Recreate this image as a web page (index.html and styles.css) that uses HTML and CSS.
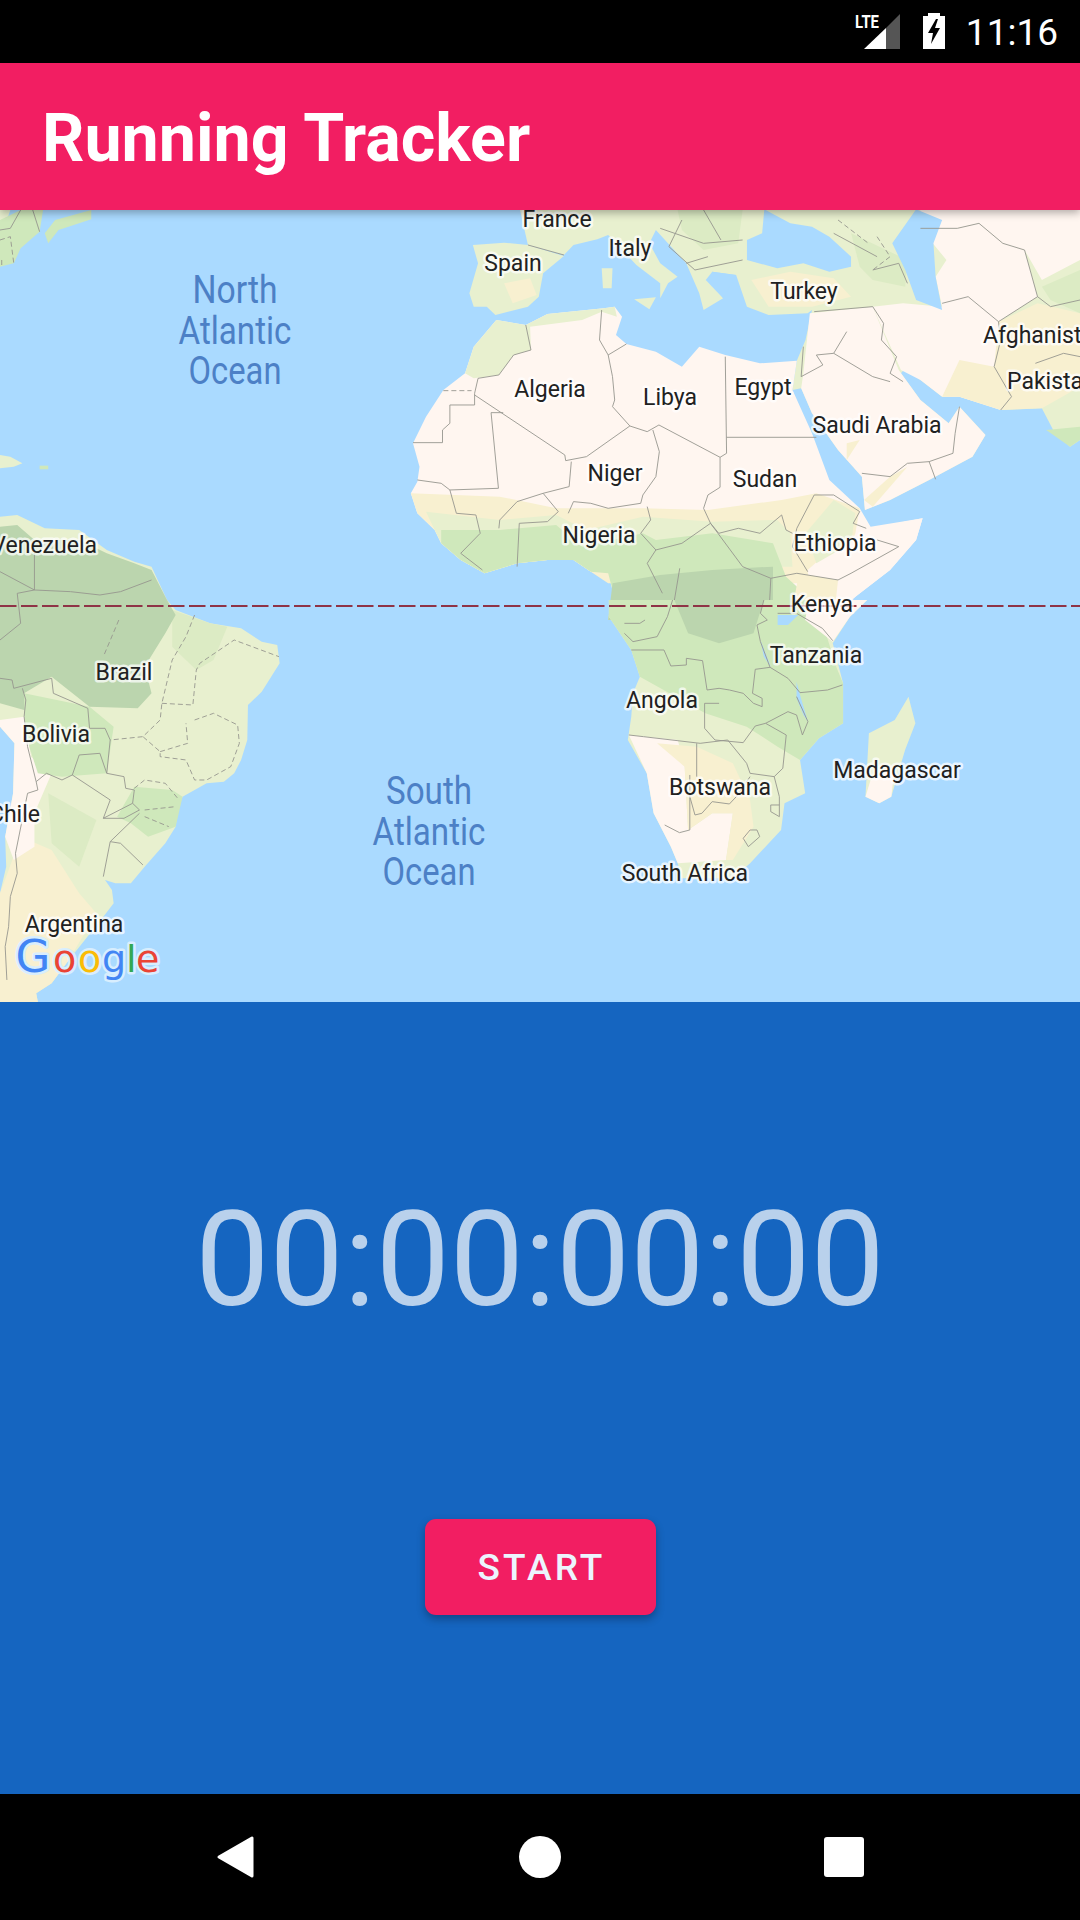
FILE: index.html
```html
<!DOCTYPE html>
<html lang="en">
<head>
<meta charset="utf-8">
<title>Running Tracker</title>
<link rel="stylesheet" href="styles.css">
</head>
<body>
<div class="screen">
  <header class="status-bar">
    <svg class="signal-icon" width="46" height="38" viewBox="0 0 46 38">
      <text class="lte" x="0" y="15" textLength="24" lengthAdjust="spacingAndGlyphs">LTE</text>
      <path class="signal-off" d="M31 36V15L45 1V36Z"/>
      <path class="signal-on" d="M9 36L31 15V36Z"/>
    </svg>
    <svg class="battery-icon" width="22" height="36" viewBox="0 0 22 36">
      <path class="battery" d="M5 0H17V3H22V36H0V3H5Z"/>
      <path class="bolt" d="M13 6L5 20H10L8 31L17 15H12L15 6Z"/>
    </svg>
    <span class="clock">11:16</span>
  </header>

  <div class="app-bar"><h1 class="app-title">Running Tracker</h1></div>

  <section class="map">
    <svg class="map-svg" width="1080" height="792" viewBox="0 0 1080 792">
      <rect class="ocean" width="1080" height="792"/>

      <!-- Europe, Africa north and Asia: authored at 0.4337 x 0.3333 -->
      <g transform="translate(400,-10) scale(0.4337,0.3333)">
        <path class="land" d="M275,20L295,135L378,165L400,135L455,118L480,105L545,195L600,250L600,295L618,250L640,230L600,190L575,130L590,90L660,190L690,280L700,330L745,295L715,235L720,215L775,225L800,320L850,345L940,340L950,330L935,420L915,482L905,570L925,565L950,640L1010,750L1065,830L1072,930L1130,900L1220,840L1320,770L1350,705L1290,620L1265,670L1200,600L1155,520L1165,505L1200,540L1250,590L1290,590L1390,630L1480,625L1510,700L1545,740L1568,720V20Z"/>
        <path class="land" d="M168,135L240,128L295,135L378,168L330,220L320,290L295,320L220,345L200,320L170,320L160,280L180,190Z"/>
        <path class="sand" d="M240,250L300,235L315,285L260,310Z"/>
        <path class="land" d="M465,205L490,205L488,265L468,265Z"/>
        <path class="land" d="M540,298L590,292L575,328Z"/>
        <path class="soft" d="M640,30L790,30L780,130L700,150L650,90Z"/>
        <path class="soft" d="M1040,100L1170,180L1165,260L1090,240L1060,200Z"/>
        <path class="sand" d="M810,240L900,215L1000,235L1040,290L950,320L850,320Z"/>
        <path class="desert" d="M945,340L1090,320L1150,510L1200,600L1265,670L1290,620L1350,705L1320,770L1220,840L1130,900L1072,930L1065,830L1010,750L950,640L925,565L930,520Z"/>
        <path class="sand" d="M1030,730L1060,720L1030,780Z"/>
        <path class="sand" d="M1070,900L1130,830L1170,800L1090,920Z"/>
        <path class="desert" d="M1090,320L1160,310L1250,320L1235,230L1260,180L1200,85L1285,85L1335,70L1390,130L1440,150L1470,290L1380,365L1385,430L1370,500L1410,590L1385,630L1290,590L1250,590L1200,540L1155,510Z"/>
        <path class="sand" d="M1290,480L1370,500L1410,590L1385,630L1290,590L1250,590Z"/>
        <path class="desert" d="M1200,30H1568V180L1480,240L1440,150L1390,130L1335,70L1285,85L1200,85Z"/>
        <path class="sand" d="M1380,365L1470,310L1568,340V560L1480,625L1385,630L1410,590L1370,500Z"/>
        <path class="soft" d="M1480,260L1568,210V340L1500,300Z"/>
        <path class="green" d="M1490,690L1568,680V720L1545,740Z"/>
        <path class="ocean" d="M840,28L900,70L950,80L990,110L1040,170L1040,200L990,215L930,190L870,205L800,180L800,120L835,100Z"/>
        <path class="ocean" d="M1190,28L1250,60L1230,130L1235,230L1250,330L1190,300L1165,210L1135,130Z"/>
        <path class="ocean" d="M720,215L775,225L745,295L705,240Z"/>

        <path class="desert" d="M222,360L290,375L340,342L470,325L495,320L512,350L498,405L522,432L590,455L650,500L690,440L750,465L830,490L915,482L905,570L950,700L990,840L1060,925L1085,980L1205,955L1190,1020L1130,1110L1050,1190L990,1260H480L490,1170L480,1120L440,1115L400,1080L340,1080L270,1090L195,1120L140,1080L95,1030L80,990L40,940L25,880L40,845L45,800L30,730L60,650L100,570L150,520L170,440Z"/>
        <path class="land" d="M222,360L290,375L340,342L470,325L495,320L500,350L465,335L420,360L300,380L302,450L262,465L228,525L170,535L150,520L170,440Z"/>
        <path class="sand" d="M25,880L230,890L360,925L560,925L710,930L880,900L960,880L1060,925L1050,1000L1000,1150H480L440,1115L400,1080L340,1080L270,1090L195,1120L140,1080L95,1030L80,990L40,940Z"/>
        <path class="land" d="M60,935L230,960L360,945L430,990L560,950L720,965L870,960L900,1000L905,1100H480L440,1115L400,1080L340,1080L270,1090L195,1120L140,1080L95,1030L80,990Z"/>
        <path class="green" d="M95,990L230,990L360,975L420,1040L560,1000L590,1020L720,1000L860,1030L890,1130L1000,1260H480L490,1170L480,1120L440,1115L400,1080L340,1080L270,1090L195,1120L140,1080L95,1030Z"/>
        <path class="dark" d="M490,1150L600,1125L720,1110L860,1100L860,1260H480Z"/>
        <path class="desert" d="M1085,985L1205,955L1190,1020L1130,1110L1050,1190L990,1260H950L940,1110L1000,1040Z"/>
        <path class="sand" d="M920,1120L1010,1140L1000,1260H900Z"/>
        <path class="land" d="M935,1000L1000,900L1050,940L1040,1030L960,1090Z"/>

        <g class="border">
          <path class="dash" d="M100,572H165"/>
          <path d="M290,375L302,450L262,465L228,525L180,535L172,580"/>
          <path d="M30,728H98V690L115,670V615H172V580"/>
          <path d="M172,585L380,765L382,782L430,770L530,678"/>
          <path d="M238,638H210L227,865L115,870L95,850L40,840"/>
          <path d="M530,678L570,695L597,675L738,772V862L710,885L700,925L716,970L735,1000L780,985L830,1000L880,945L890,990L905,1000"/>
          <path d="M750,470L753,760L738,772"/>
          <path d="M753,712H960"/>
          <path d="M465,330L460,420L480,465L490,530L495,600L490,620L530,678"/>
          <path d="M480,465L522,432"/>
          <path d="M583,690L598,755L590,830L560,885L555,910L480,925L440,910L400,905L388,940"/>
          <path d="M395,785L390,860L330,880L270,905L230,960L228,985"/>
          <path d="M330,880L365,935L340,965L275,970L270,1100"/>
          <path d="M115,870L130,940L175,945L185,1000L140,1060L190,1110"/>
          <path d="M955,885L915,985L905,1040L940,1115"/>
          <path d="M955,885L1000,885L1060,935L1045,970L1075,985"/>
          <path d="M716,970L790,1100L855,1135L915,1120L1010,1140L1040,1120L1150,1040L1100,1020"/>
          <path d="M570,920L578,960L555,1000L590,1050L650,1030L716,970"/>
          <path d="M590,1050L570,1090L605,1180"/>
          <path d="M645,1105L625,1260"/>
          <path d="M855,1135L850,1260"/>
          <path d="M955,335L1090,320L1115,370L1110,420L1145,470L1130,520L1160,545"/>
          <path d="M1030,395L1000,460L960,465L975,495L925,530L930,440"/>
          <path d="M1000,460L1090,530L1130,545"/>
          <path d="M1065,820L1130,830L1170,790L1220,785L1275,760L1280,700L1290,620"/>
          <path d="M1220,785L1235,838"/>
          <path d="M1250,310L1310,290L1380,365L1385,420L1370,500L1410,590L1385,630"/>
          <path d="M1200,85L1285,85L1335,70L1390,130L1440,150L1470,290L1380,365"/>
          <path d="M1470,290L1500,320L1568,300"/>
          <path d="M1465,490L1530,460L1568,470"/>
          <path d="M295,135L378,165M600,85L700,130L790,120M650,60L620,140L680,210L790,180M700,30L740,120M1090,210L1150,190L1170,250M1000,100L1100,170M660,190L710,170"/>
          <path class="dash" d="M1100,110L1130,170L1090,210M1010,60L1080,130"/>
        </g>
      </g>

      <!-- North America and the Caribbean: 0.3444 x 0.3333 -->
      <g transform="translate(0,-10) scale(0.3444,0.3333)">
        <path class="land" d="M0,30H30L20,60L0,60Z"/>
        <path class="green" d="M0,60L60,30H125L115,95L60,145L40,190L0,200Z"/>
        <path class="green" d="M160,60L265,30L265,58L170,90L140,130L130,100Z"/>
        <path class="land" d="M0,765L30,770L65,790L40,800L0,805Z"/>
        <path class="green" d="M115,797H140V808H115Z"/>
        <g class="border">
          <path d="M0,90L30,85L60,30M95,30L115,95"/>
          <path class="dash" d="M0,120L30,110L40,190M5,180V200"/>
        </g>
      </g>

      <!-- South America: 0.3444 x 0.3333 -->
      <g transform="translate(0,350) scale(0.3444,0.3333)">
        <path class="land" d="M0,-130L50,-135L130,-95L230,-90L310,-30L390,5L440,20L485,120L510,150L610,190L700,205L760,245L805,255L812,310L760,395L720,435L718,540L700,600L680,640L650,665L600,670L530,710L515,750L510,800L480,850L420,920L380,970L335,970L305,960L325,990L330,1030L300,1070L200,1200L150,1270L105,1300L110,1326H0V1000L18,920L15,830L38,700L42,550L0,500Z"/>
        <path class="sand" d="M18,950L60,830L150,870L230,1000L280,1060L200,1200L150,1270L105,1300L110,1326H0V1000Z"/>
        <path class="desert" d="M0,480L70,470L90,590L150,640L100,760L100,860L40,900L15,830L38,700L42,550L0,500Z"/>
        <path class="green" d="M70,400L260,440L330,500L310,640L180,650L110,640L85,560L70,470Z"/>
        <path class="soft" d="M500,150L610,190L660,200L620,300L570,330L500,260Z"/>
        <path class="soft" d="M140,700L280,780L230,920L150,850Z"/>
        <path class="green" d="M390,680L500,690L530,710L510,800L430,830L380,790L340,770Z"/>
        <path class="dark" d="M0,-100L50,-105L100,-60L230,-60L310,-20L390,10L440,30L485,120L510,165L480,220L420,320L440,400L400,445L260,440L150,350L70,400L70,450L0,430Z"/>
        <g class="border">
          <path d="M0,35L100,90L205,95L290,105L350,95L440,60"/>
          <path d="M100,-20L100,90L50,100L60,190L0,240"/>
          <path d="M0,355L35,360L40,385L150,355L155,400L255,445L260,505H305L320,540L310,640L360,650L365,685L390,690L385,730L300,775H360L405,750L385,730M310,640L290,580L230,585L210,645L180,660L135,640L105,665L80,560L70,470L75,420L65,385"/>
          <path d="M210,645L320,720L300,775M105,665L110,690L80,700L45,880L50,940L30,1010L25,1100L15,1160L20,1260"/>
          <path d="M405,760L320,845L300,950M320,845L350,850L415,915"/>
          <path class="dash" d="M345,180L300,290M565,165L540,230L500,300L470,430L465,480L415,530L320,540M470,430L560,435L570,330L580,310L680,240L810,290M565,480L620,460L690,495L695,550L670,620L600,660L565,660L540,600L465,590L465,575L415,530M465,575L545,550L540,490M390,685L420,660L480,670L520,720M420,750L510,740M420,770L490,800"/>
        </g>
      </g>

      <!-- Africa south and Madagascar: 0.3444 x 0.3333 -->
      <g transform="translate(540,390) scale(0.3444,0.3333)">
        <path class="land" d="M200,0V50L265,150L290,230L270,280L265,350L255,420L310,520L330,640L380,740L400,790L410,835H560L610,790L700,690L710,610L770,580L755,480L810,415L880,370L880,250L850,130L900,50L950,0Z"/>
        <path class="green" d="M200,0H800L860,200L880,250L880,370L810,415L755,480L690,440L600,380L480,340L290,230L265,150L200,50Z"/>
        <path class="dark" d="M390,0H650L620,100L520,130L430,100Z"/>
        <path class="desert" d="M258,405L400,420L420,500L430,690L500,640L560,640L540,780L400,790L380,740L330,640L310,520Z"/>
        <path class="sand" d="M340,430L455,440L560,490L610,600L620,680L560,780L540,780L560,640L500,640L430,690L420,500Z"/>
        <path class="desert" d="M780,0H950L900,50L850,125L770,60Z"/>
        <path class="land" d="M1070,290L1090,370L1060,450L1020,590L985,610L945,590L955,400L1030,360Z"/>
        <path class="desert" d="M960,540L1030,500L1020,590L985,610L945,590Z"/>
        <path class="ocean" d="M745,245L755,285L778,365L765,345L745,295Z"/>
        <path class="ocean" d="M690,45H750L720,75H690Z"/>
        <path class="ocean" d="M640,120L670,200L650,170Z"/>
        <g class="border">
          <path d="M265,150H360L380,198L425,195L425,175L472,182L485,270L520,265L550,270L590,280L620,310L645,320V295L617,280L625,208L668,202L720,235L755,278L835,270L878,255"/>
          <path d="M668,202L640,125L630,75L660,60L640,40L650,0"/>
          <path d="M690,40H745L820,85L850,122"/>
          <path d="M478,310H520M478,310V385L508,420L590,428L625,378L655,370L720,335L745,345L762,405L778,365L745,290"/>
          <path d="M258,405L300,410L465,430L545,420L600,490L610,520L680,530L705,505L715,405L655,370"/>
          <path d="M455,430V530M435,525V690L405,698L362,675"/>
          <path d="M435,590L450,645L470,640L500,605L550,612L570,590L610,530M680,530L695,590V650L670,635V615L695,615M590,715L610,690L630,690L638,710L605,740Z"/>
          <path d="M245,100L270,125L340,110L370,50L385,0M245,70L290,70L305,60"/>
        </g>
      </g>

      <path class="equator" d="M0,396H1080"/>

      <g class="label">
        <text x="557" y="17" text-anchor="middle">France</text>
        <text x="513" y="61" text-anchor="middle">Spain</text>
        <text x="630" y="46" text-anchor="middle">Italy</text>
        <text x="804" y="89" text-anchor="middle">Turkey</text>
        <text x="983" y="133">Afghanistan</text>
        <text x="1007" y="179">Pakistan</text>
        <text x="550" y="187" text-anchor="middle">Algeria</text>
        <text x="670" y="195" text-anchor="middle">Libya</text>
        <text x="763" y="185" text-anchor="middle">Egypt</text>
        <text x="877" y="223" text-anchor="middle">Saudi Arabia</text>
        <text x="615" y="271" text-anchor="middle">Niger</text>
        <text x="765" y="277" text-anchor="middle">Sudan</text>
        <text x="599" y="333" text-anchor="middle">Nigeria</text>
        <text x="835" y="341" text-anchor="middle">Ethiopia</text>
        <text x="822" y="402" text-anchor="middle">Kenya</text>
        <text x="816" y="453" text-anchor="middle">Tanzania</text>
        <text x="662" y="498" text-anchor="middle">Angola</text>
        <text x="720" y="585" text-anchor="middle">Botswana</text>
        <text x="897" y="568" text-anchor="middle">Madagascar</text>
        <text x="685" y="671" text-anchor="middle">South Africa</text>
        <text x="124" y="470" text-anchor="middle">Brazil</text>
        <text x="56" y="532" text-anchor="middle">Bolivia</text>
        <text x="40" y="612" text-anchor="end">Chile</text>
        <text x="74" y="722" text-anchor="middle">Argentina</text>
        <text x="97" y="343" text-anchor="end">Venezuela</text>
      </g>

      <g class="ocean-label">
        <text x="235" y="93" text-anchor="middle" textLength="85" lengthAdjust="spacingAndGlyphs">North</text>
        <text x="235" y="134" text-anchor="middle" textLength="113" lengthAdjust="spacingAndGlyphs">Atlantic</text>
        <text x="235" y="174" text-anchor="middle" textLength="93" lengthAdjust="spacingAndGlyphs">Ocean</text>
        <text x="429" y="594" text-anchor="middle" textLength="86" lengthAdjust="spacingAndGlyphs">South</text>
        <text x="429" y="635" text-anchor="middle" textLength="113" lengthAdjust="spacingAndGlyphs">Atlantic</text>
        <text x="429" y="675" text-anchor="middle" textLength="93" lengthAdjust="spacingAndGlyphs">Ocean</text>
      </g>

      <text class="google" y="762"><tspan class="g-cap g-blue" x="15.5">G</tspan><tspan class="g-red" x="53">o</tspan><tspan class="g-yellow" x="78">o</tspan><tspan class="g-blue" x="102">g</tspan><tspan class="g-green" x="126">l</tspan><tspan class="g-red" x="136">e</tspan></text>
    </svg>
  </section>

  <main class="panel">
    <div class="timer">00:00:00:00</div>
    <button class="start-button">START</button>
  </main>

  <nav class="nav-bar">
    <svg class="nav-icon" width="40" height="44" viewBox="0 0 40 44">
      <path class="nav-shape" d="M36 3V41L3 22Z"/>
    </svg>
    <span class="nav-home"></span>
    <span class="nav-recent"></span>
  </nav>
</div>
</body>
</html>
```

FILE: styles.css
```css
* { box-sizing: border-box; }
html, body { margin: 0; padding: 0; }
body { font-family: Roboto, "Liberation Sans", sans-serif; background: #000; }

.screen { width: 1080px; height: 1920px; display: flex; flex-direction: column; overflow: hidden; }

.status-bar { height: 63px; background: #000; display: flex; align-items: flex-start; justify-content: flex-end; padding: 13px 22px 0 0; color: #fff; }
.signal-icon { margin-right: 22px; }
.lte { font: 700 18px Roboto, sans-serif; fill: #fff; }
.signal-on { fill: #fff; }
.signal-off { fill: #555; }
.battery-icon { margin-right: 21px; }
.battery { fill: #fff; }
.bolt { fill: #000; }
.clock { font-size: 37px; line-height: 40px; }

.app-bar { height: 147px; background: #f21e62; display: flex; align-items: center; padding: 4px 42px 0; position: relative; z-index: 2; box-shadow: 0 3px 8px rgba(0, 0, 0, 0.3); }
.app-title { margin: 0; font-size: 66.3px; font-weight: 700; color: #fff; line-height: 1; }

.map { height: 792px; }
.map-svg { display: block; }
.ocean { fill: #aadaff; }
.land { fill: #e8f0cf; }
.soft { fill: #dcebc4; }
.green { fill: #cfe8bb; }
.dark { fill: #bbd5ae; }
.sand { fill: #f8f0d0; }
.desert { fill: #fff6f0; }
.border path { fill: none; stroke: #96968f; stroke-width: 0.9px; vector-effect: non-scaling-stroke; }
.border .dash { stroke-dasharray: 5 3; }
.equator { stroke: #8f3346; stroke-width: 2px; stroke-dasharray: 16.5 4.5; fill: none; }

.label text { font: 400 23px Roboto, sans-serif; fill: #212121; stroke: rgba(255, 255, 255, 0.72); stroke-width: 5px; stroke-linejoin: round; paint-order: stroke; }
.ocean-label text { font: 400 39px Roboto, sans-serif; fill: #4c80c6; }

.google { font: 400 38px "DejaVu Sans", sans-serif; stroke: #d8eefe; stroke-width: 5px; stroke-linejoin: round; paint-order: stroke; }
.g-cap { font-size: 45px; }
.g-blue { fill: #4285f4; }
.g-red { fill: #ea4335; }
.g-yellow { fill: #fbbc05; }
.g-green { fill: #34a853; }

.panel { height: 792px; background: #1565c0; display: flex; flex-direction: column; align-items: center; padding-top: 181px; }
.timer { font-size: 132px; line-height: 154px; color: #b9d1ec; }
.start-button { margin-top: 182px; width: 231px; height: 96px; border: 0; border-radius: 11px; background: #f21e62; color: #ecf4fd; font: 500 37px Roboto, sans-serif; letter-spacing: 3.1px; box-shadow: 0 4px 8px rgba(0, 0, 0, 0.3); padding: 0 0 0 3px; }

.nav-bar { height: 126px; background: #000; position: relative; display: flex; align-items: center; justify-content: space-between; padding: 0 216px 0 216px; }
.nav-shape { fill: #fff; stroke: #fff; stroke-width: 3px; stroke-linejoin: round; }
.nav-home { width: 42px; height: 42px; border-radius: 50%; background: #fff; }
.nav-recent { width: 40px; height: 40px; border-radius: 3px; background: #fff; }
```
